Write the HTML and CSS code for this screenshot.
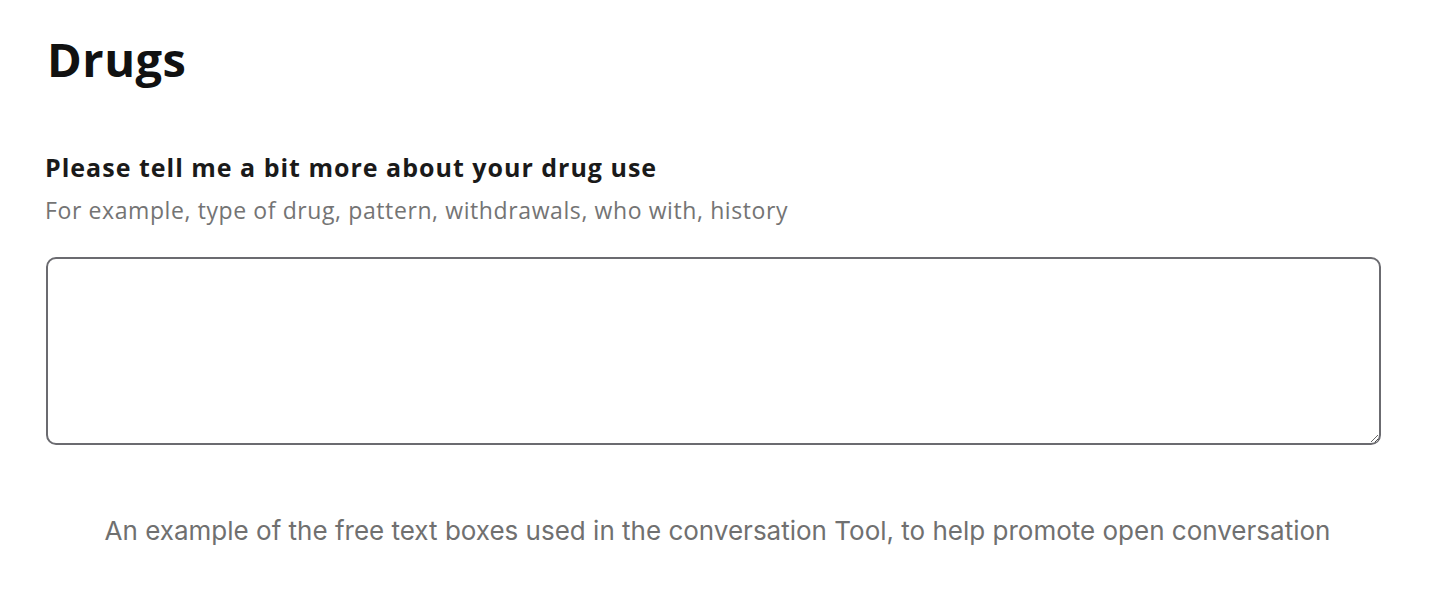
FILE: index.html
```html
<!DOCTYPE html>
<html lang="en">
<head>
  <meta charset="UTF-8">
  <title>Drugs - Conversation Tool</title>
  <link rel="stylesheet" href="styles.css">
</head>
<body>

<figure class="figure">
  <!-- Screenshot of the form section -->
  <section class="shot">
    <h1>Drugs</h1>
    <label class="question" for="drugUse">Please tell me a bit more about your drug use</label>
    <p class="hint">For example, type of drug, pattern, withdrawals, who with, history</p>
    <textarea id="drugUse" class="answer"></textarea>
  </section>

  <figcaption>An example of the free text boxes used in the conversation Tool, to help promote open conversation</figcaption>
</figure>

</body>
</html>
```

FILE: styles.css
```css
* { box-sizing: border-box; margin: 0; padding: 0; }
body { background: #fff; font-family: 'Open Sans', sans-serif; color: #111; }

.figure { width: 1432px; height: 600px; }

.shot { padding: 32px 51px 0 45px; display: flex; flex-direction: column; }
.shot h1 { font-size: 47px; font-weight: 700; line-height: 54px; margin-left: 2px; color: #111; letter-spacing: 0.5px; }
.question { display: block; margin-top: 66px; font-size: 25px; font-weight: 700; line-height: 30px; color: #1a1a1a; letter-spacing: 1px; }
.hint { margin-top: 14px; font-size: 23px; line-height: 28px; color: #747474; letter-spacing: 0.6px; }
.answer {
  margin-top: 33px; margin-left: 1px; width: 1335px; height: 188px;
  border: 2px solid #6b6b70; border-radius: 10px; background: #fff;
  resize: vertical; outline: none;
}

figcaption {
  margin-top: 70px; text-align: center; padding-left: 3px;
  font-family: 'Inter', sans-serif; font-size: 26px; line-height: 32px; color: #707070;
}
```
